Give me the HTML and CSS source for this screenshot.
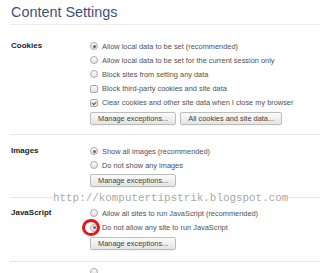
FILE: index.html
```html
<!DOCTYPE html>
<html lang="en">
<head>
    <meta charset="UTF-8">
    <title>Content Settings</title>
    <link rel="stylesheet" href="styles.css">
</head>
<body>
    <div class="page">
        <h1 class="page-title">Content Settings</h1>

        <div class="section">
            <div class="section-label">Cookies</div>
            <div class="section-body">
                <label class="option"><input type="radio" name="cookies" checked> Allow local data to be set (recommended)</label>
                <label class="option"><input type="radio" name="cookies"> Allow local data to be set for the current session only</label>
                <label class="option"><input type="radio" name="cookies"> Block sites from setting any data</label>
                <label class="option"><input type="checkbox"> Block third-party cookies and site data</label>
                <label class="option"><input type="checkbox" checked> Clear cookies and other site data when I close my browser</label>
                <div class="buttons">
                    <button class="btn">Manage exceptions...</button>
                    <button class="btn">All cookies and site data...</button>
                </div>
            </div>
        </div>

        <div class="section section-images">
            <div class="section-label">Images</div>
            <div class="section-body">
                <label class="option"><input type="radio" name="images" checked> Show all images (recommended)</label>
                <label class="option"><input type="radio" name="images"> Do not show any images</label>
                <div class="buttons">
                    <button class="btn">Manage exceptions...</button>
                </div>
            </div>
        </div>

        <div class="section section-js">
            <div class="section-label">JavaScript</div>
            <div class="section-body">
                <label class="option"><input type="radio" name="js"> Allow all sites to run JavaScript (recommended)</label>
                <label class="option option-marked"><input type="radio" name="js" checked> Do not allow any site to run JavaScript<span class="mark-ring"></span></label>
                <div class="buttons">
                    <button class="btn">Manage exceptions...</button>
                </div>
            </div>
        </div>

        <div class="section section-next">
            <div class="section-label"></div>
            <div class="section-body">
                <label class="option"><input type="radio" name="handlers"></label>
            </div>
        </div>

        <div class="watermark">http://komputertipstrik.blogspot.com</div>
    </div>
</body>
</html>
```

FILE: styles.css
```css
* {
    box-sizing: border-box;
    margin: 0;
    padding: 0;
}

html, body {
    width: 100%;
    height: 100%;
    overflow: hidden;
    background: #fff;
}

body {
    font-family: "Liberation Sans", Arial, sans-serif;
    color: #444;
}

.page {
    position: relative;
    padding-left: 10px;
}

.page-title {
    font-size: 14.4px;
    font-weight: normal;
    line-height: 15px;
    color: #3f4e7c;
    padding: 5px 0 4px 1px;
    border-bottom: 1px solid #eaeaea;
}

.section {
    display: grid;
    grid-template-columns: 80px 1fr;
    padding: 14px 0 9px;
    border-bottom: 1px solid #e6e6e6;
}

.section-images {
    padding: 9px 0 10px;
}

.section-js {
    padding: 8px 0 11px;
    border-bottom: 1px dotted #d8d8d8;
}

.section-next {
    padding: 3px 0 0;
    border-bottom: none;
}

.section-label {
    font-size: 8px;
    font-weight: bold;
    color: #1e1e1e;
    line-height: 14.2px;
    padding-left: 1px;
}

.section-body {
    display: flex;
    flex-direction: column;
}

.option {
    position: relative;
    display: flex;
    align-items: center;
    gap: 4px;
    height: 14.2px;
    font-size: 7.4px;
    color: #505050;
    white-space: nowrap;
}

.option input {
    appearance: none;
    -webkit-appearance: none;
    width: 8px;
    height: 8px;
    flex: none;
    border: 1px solid #a9a9a9;
    background: linear-gradient(#fdfdfd, #e2e2e2);
    display: grid;
    place-items: center;
}

.option input[type="radio"] {
    border-radius: 50%;
}

.option input[type="checkbox"] {
    border-radius: 2px;
}

.option input[type="radio"]:checked::after {
    content: "";
    width: 3px;
    height: 3px;
    border-radius: 50%;
    background: #666;
}

.option input[type="checkbox"]:checked::after {
    content: "";
    width: 3px;
    height: 1.6px;
    border-left: 1.2px solid #555;
    border-bottom: 1.2px solid #555;
    transform: translateY(-0.6px) rotate(-45deg);
}

.mark-ring {
    position: absolute;
    left: -8px;
    top: -1.6px;
    width: 18px;
    height: 17px;
    border: 3px solid #e8141a;
    border-radius: 50%;
}

.buttons {
    display: flex;
    gap: 4px;
    margin-top: 2px;
}

.btn {
    height: 13px;
    padding: 0 7px;
    font-family: inherit;
    font-size: 7.4px;
    color: #444;
    background: linear-gradient(#fbfbfb, #e4e4e4);
    border: 1px solid #bdbdbd;
    border-radius: 2px;
    box-shadow: 0 1px 0 rgba(0, 0, 0, 0.04);
}

.watermark {
    position: absolute;
    left: 53px;
    top: 191px;
    font-family: "Liberation Mono", "Courier New", monospace;
    font-size: 10.9px;
    line-height: 14px;
    color: #a9a9a9;
    background: #fff;
    white-space: nowrap;
}
```
